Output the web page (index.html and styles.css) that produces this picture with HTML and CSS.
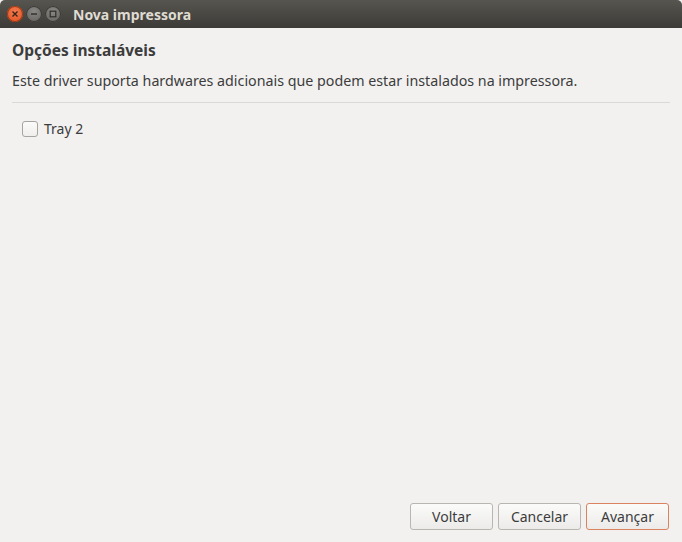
FILE: index.html
```html
<html>

<head>
	<title>Nova impressora</title>
	<link rel="stylesheet" href="styles.css">
</head>

<body>
	<div class="window">
		<div class="titlebar">
			<div class="controls">
				<span class="ctl close">
					<svg width="8" height="8" viewBox="0 0 8 8"><path d="M1.5 1.5 L6.5 6.5 M6.5 1.5 L1.5 6.5" stroke="#3a2418" stroke-width="1.4" /></svg>
				</span>
				<span class="ctl">
					<svg width="8" height="8" viewBox="0 0 8 8"><path d="M1 4 H7" stroke="#2e2d2a" stroke-width="1.4" /></svg>
				</span>
				<span class="ctl">
					<svg width="8" height="8" viewBox="0 0 8 8"><rect x="1.2" y="1.2" width="5.6" height="5.6" fill="none" stroke="#2e2d2a" stroke-width="1.2" /></svg>
				</span>
			</div>
			<span class="title">Nova impressora</span>
		</div>

		<div class="content">
			<h1>Opções instaláveis</h1>
			<p>Este driver suporta hardwares adicionais que podem estar instalados na impressora.</p>
			<hr>
			<label class="option">
				<span class="check"></span>
				Tray 2
			</label>
		</div>

		<div class="actions">
			<button>Voltar</button>
			<button>Cancelar</button>
			<button class="default">Avançar</button>
		</div>
	</div>
</body>

</html>
```

FILE: styles.css
```css
html,
body {
	margin: 0;
	height: 100%;
}

body {
	font-family: 'Noto Sans', 'DejaVu Sans', sans-serif;
	font-size: 14px;
	color: #3c3c3c;
	background: #f2f1f0;
}

.window {
	display: flex;
	flex-direction: column;
	height: 100%;
}

.titlebar {
	height: 28px;
	display: flex;
	align-items: center;
	background: linear-gradient(#57554f, #3c3b37);
	border-radius: 5px 5px 0 0;
	padding: 0 0 0 7px;
}

.controls {
	display: flex;
	gap: 3px;
}

.ctl {
	width: 16px;
	height: 16px;
	border-radius: 50%;
	display: flex;
	align-items: center;
	justify-content: center;
	background: radial-gradient(circle at 50% 35%, #8a8884, #5f5e5a);
	box-shadow: inset 0 0 0 1px #3a3935;
}

.ctl.close {
	background: radial-gradient(circle at 50% 35%, #f37a4f, #e0501f);
	box-shadow: inset 0 0 0 1px #9c3a17;
}

.title {
	margin-left: 12px;
	font-weight: bold;
	font-size: 14px;
	color: #dfdbd2;
}

.content {
	flex: 1;
	padding: 12px 12px 0;
}

h1 {
	margin: 0;
	font-size: 15.5px;
	font-weight: bold;
	line-height: 20px;
}

p {
	margin: 12px 0 0;
	font-size: 14.25px;
	line-height: 18px;
}

hr {
	margin: 12px 0 0;
	border: 0;
	border-top: 1px solid #dbd9d6;
}

.option {
	display: flex;
	align-items: center;
	gap: 6px;
	margin: 16px 0 0 10px;
}

.check {
	width: 14px;
	height: 14px;
	border: 1px solid #a6a4a0;
	border-radius: 3px;
	background: linear-gradient(#fbfbfa, #efeeed);
}

.actions {
	display: flex;
	justify-content: flex-end;
	gap: 5px;
	padding: 0 13px 12px;
}

button {
	width: 83px;
	height: 27px;
	font: inherit;
	color: #3c3c3c;
	border: 1px solid #b9b6b2;
	border-radius: 3px;
	background: linear-gradient(#fbfbfa, #ecebe9);
}

button.default {
	border-color: #d98360;
}
```
